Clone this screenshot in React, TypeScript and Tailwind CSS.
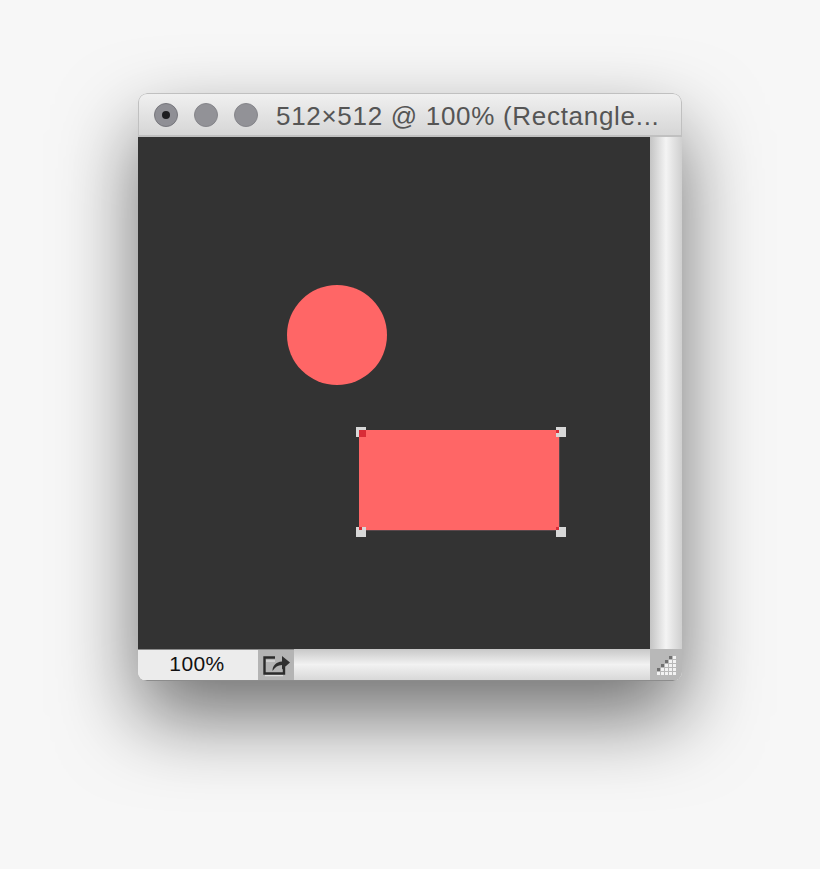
import React from 'react';

const handles = [
  'left-[218px] top-[290px]',
  'left-[418px] top-[290px]',
  'left-[218px] top-[390px]',
  'left-[418px] top-[390px]',
];

function ShareIcon() {
  return (
    <svg width="28" height="24" viewBox="0 0 28 24" fill="none">
      <path d="M3 8H12" stroke="#cfcfcf" strokeWidth="2" />
      <path d="M2 22.5H20" stroke="#dedede" strokeWidth="1.5" />
      <path d="M12 4.5H1.5V20.5H21V14" stroke="#2b2b2b" strokeWidth="2.4" />
      <path d="M9.5 18C9.5 12.5 13 9 19 8.5V3L27 9.5L19 16.5V12C15 12 12 14 9.5 18Z" fill="#2f2f2f" />
    </svg>
  );
}

function ResizeGrip() {
  const dots: React.ReactNode[] = [];
  for (let col = 0; col < 5; col++) {
    const cells = col + 2;
    for (let row = 0; row < cells; row++) {
      const top = row === cells - 1;
      dots.push(
        <rect
          key={`${col}-${row}`}
          x={col * 4}
          y={20 - (row + 1) * 4 + 1}
          width="3"
          height="3"
          fill={top ? '#707070' : '#f2f2f2'}
        />
      );
    }
  }
  return (
    <svg width="19" height="21" viewBox="0 0 19 21">
      {dots}
    </svg>
  );
}

export default function App() {
  return (
    <div className="flex h-[869px] w-[820px] justify-center overflow-hidden bg-[#f7f7f7] pt-[93px] font-['Liberation_Sans',Arial,sans-serif]">
      <div className="flex h-[588px] w-[544px] flex-col overflow-hidden rounded-[9px] shadow-[0_36px_80px_0_rgba(0,0,0,0.55)]">
        {/* title bar */}
        <div className="flex h-[44px] shrink-0 items-center gap-4 rounded-t-[9px] border border-b-2 border-[#c0c0c0] bg-gradient-to-b from-[#f0f0f0] to-[#d6d6d6] pl-[15px]">
          <div className="flex h-6 w-6 items-center justify-center rounded-full border border-[#77777d] bg-[#8f8f95]">
            <div className="h-2 w-2 rounded-full bg-[#1d1d20]" />
          </div>
          <div className="h-6 w-6 rounded-full border border-[#85858a] bg-[#929297]" />
          <div className="h-6 w-6 rounded-full border border-[#85858a] bg-[#929297]" />
          <span className="ml-[2px] whitespace-nowrap pt-[2px] text-[26px] leading-none tracking-[0.7px] text-[#555555]">
            512×512 @ 100% (Rectangle...
          </span>
        </div>

        {/* canvas + scrollbar */}
        <div className="flex h-[512px] shrink-0">
          <div className="relative h-[512px] w-[512px] shrink-0 bg-[#333333]">
            <div className="absolute left-[149px] top-[148px] h-[100px] w-[100px] rounded-full bg-[#ff6666]" />
            <div className="absolute left-[221px] top-[293px] h-[100px] w-[200px] bg-[#ff6666] shadow-[1px_1px_0_0_#5a474b]" />
            {handles.map((pos) => (
              <div key={pos} className={`absolute h-[10px] w-[10px] bg-[#d8d8d8] ${pos}`} />
            ))}
            <div className="absolute left-[221px] top-[293px] h-[7px] w-[7px] bg-[#d92c37]" />
            <div className="absolute left-[418px] top-[293px] h-[3px] w-[3px] bg-[#d92c37]" />
            <div className="absolute left-[221px] top-[390px] h-[3px] w-[3px] bg-[#d92c37]" />
            <div className="absolute left-[418px] top-[390px] h-[3px] w-[3px] bg-[#d92c37]" />
          </div>
          <div className="flex-1 bg-gradient-to-r from-[#c4c4c4] via-[#f4f4f4] to-[#cfcfcf]" />
        </div>

        {/* status bar */}
        <div className="flex h-[32px] shrink-0 border-b border-[#8c8c8c]">
          <div className="flex w-[120px] items-center justify-center border-t border-[#8c8c8c] bg-[#ececec] pb-[4px] pr-[2px] text-[21px] leading-none tracking-[0.4px] text-[#111111]">
            100%
          </div>
          <div className="flex w-9 items-center justify-center border-t border-[#8c8c8c] bg-[#b4b4b4] pl-[2px]">
            <ShareIcon />
          </div>
          <div className="flex-1 bg-gradient-to-b from-[#c8c8c8] via-[#f2f2f2] to-[#d8d8d8]" />
          <div className="flex w-8 items-end justify-end bg-[#b8b8b8] pb-[4px] pr-[6px]">
            <ResizeGrip />
          </div>
        </div>
      </div>
    </div>
  );
}
